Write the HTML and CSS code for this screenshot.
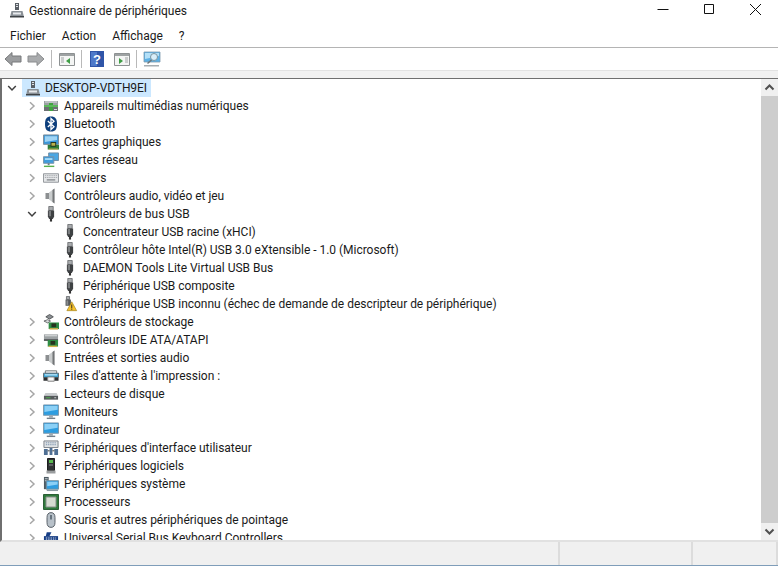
FILE: index.html
```html
<!DOCTYPE html>
<html lang="fr">
<head>
<meta charset="utf-8">
<title>Gestionnaire de périphériques</title>
<link rel="stylesheet" href="styles.css">
</head>
<body>
<svg class="defs" width="0" height="0" aria-hidden="true">
  <defs>
    <symbol id="chev-r" viewBox="0 0 10 10"><path d="M3 1.200 7 5 3 8.800" fill="none" stroke="#a6a6a6" stroke-width="1.500"/></symbol>
    <symbol id="chev-d" viewBox="0 0 10 10"><path d="M1.200 3 5 7 8.800 3" fill="none" stroke="#404040" stroke-width="1.500"/></symbol>
    <symbol id="pc" viewBox="0 0 16 16"><path d="M6 1h4v7H6z" fill="#5a5f66"/><path d="M7 2.500h2M7 4.500h2" stroke="#dfe3e6"/><path d="M2.500 9h11l1.500 6H1z" fill="#8a9096"/><path d="M4 10.500h8v2H4z" fill="#e6e9ec"/><path d="M1 14h14v1.500H1z" fill="#3f4347"/></symbol>
    <symbol id="media" viewBox="0 0 16 16"><path d="M1 3h14v4H1z" fill="#9aa0a3"/><path d="M2 3.500h12v1H2z" fill="#dfe2e3"/><path d="M1 9h14v4H1z" fill="#6b7073"/><path d="M6 5h4v8H6z" fill="#3fa33f"/><path d="M1 7h14v2H1z" fill="#5cb85c"/><path d="M11 11h3v1h-3z" fill="#d7dcdd"/></symbol>
    <symbol id="bt" viewBox="0 0 16 16"><path d="M8 .5c4.500 0 6 2.500 6 7.500s-1.500 7.500-6 7.500S2 13 2 8 3.500.5 8 .5z" fill="#0d3f7d"/><path d="M4.800 5 11 10.800 8 13.500v-11l3 2.700L4.800 11" fill="none" stroke="#fff" stroke-width="1.300"/></symbol>
    <symbol id="gpu" viewBox="0 0 17 16"><path d="M.5 .5h16v10H.5z" fill="#3c97d9" stroke="#7c8b96"/><path d="M2 2h13v4L2 8z" fill="#9fd4f5"/><path d="M5 11h12v5H5z" fill="#2e7d3a"/><path d="M8 8h6v5H8z" fill="#24351f"/><path d="M9 9h4v3H9z" fill="#b9b14d"/><path d="M6 15h10v1H6z" fill="#d2b24a"/></symbol>
    <symbol id="net" viewBox="0 0 17 16"><path d="M6 .5h10.500v8H6z" fill="#4aa7e4" stroke="#6d8ba3"/><path d="M.5 4.500h11v7H.5z" fill="#3f9bdc" stroke="#7a93a6"/><path d="M2 6h8v2H2z" fill="#a6dbf8"/><path d="M5 11.500h2v2H5z" fill="#6b7b86"/><path d="M1 14h11v1.500H1z" fill="#58b04c"/></symbol>
    <symbol id="kbd" viewBox="0 0 17 16"><path d="M.5 3.500h16v9H.5z" fill="#e4e6e8" stroke="#8f9397"/><path d="M2 5.500h13M2 7.500h13" stroke="#a5a9ad" stroke-dasharray="1.500 .8"/><path d="M4 10h9" stroke="#8b8f93" stroke-width="1.500"/></symbol>
    <symbol id="audio" viewBox="0 0 16 16"><path d="M2.500 5h3.500v6H2.500z" fill="#8c8f91"/><path d="M6 4.500 11.500 .5v15L6 11.500z" fill="#c9cccd"/><path d="M9.500 2l2-1.500v15l-2-1.500z" fill="#727577"/></symbol>
    <symbol id="usb" viewBox="0 0 16 18"><path d="M5.500 .5h5v4.500h-5z" fill="#a9acae" stroke="#55585a" stroke-width=".8"/><path d="M4.500 5h7v7l-1.500 2.500H6L4.500 12z" fill="#3e4143"/><path d="M5.500 5.500h2.500v6H5.500z" fill="#7a7d7f"/><path d="M6.800 14h2.400v3.500H6.800z" fill="#333"/></symbol>
    <symbol id="warn" viewBox="0 0 16 18"><path d="M4 .5h3.500v3.500H4z" fill="#a9acae" stroke="#55585a" stroke-width=".8"/><path d="M3 4h6v7H3z" fill="#55585a"/><path d="M4 5h2v5H4z" fill="#8a8d8f"/><path d="M10 6.500l5.500 10h-11z" fill="#f6c12d" stroke="#9a7a16" stroke-width=".7"/><path d="M9.500 9.500h1v4h-1zM9.500 14.200h1v1.200h-1z" fill="#222"/></symbol>
    <symbol id="storage" viewBox="0 0 17 17"><path d="M3 3l4-2.500 4 2.500-4 2.500z" fill="#8b8f92" stroke="#3c3f41" stroke-width=".8"/><path d="M1 7.500l4-1.500 3 1.500-3 2z" fill="#d8dadc" stroke="#4a4d4f" stroke-width=".8"/><path d="M6 9h11v7H6z" fill="#2e8c45"/><path d="M9 10h5v4H9z" fill="#26331f"/><path d="M7 15h9v1.500H7z" fill="#d2b24a"/></symbol>
    <symbol id="ide" viewBox="0 0 17 16"><path d="M1 2h15v5H1z" fill="#9da2a4"/><path d="M2 3h13v1H2z" fill="#e0e3e4"/><path d="M1 7h15v2H1z" fill="#555a5c"/><path d="M5 8h11v7H5z" fill="#2e8c45"/><path d="M8 9h5v4H8z" fill="#26331f"/><path d="M6 14h9v1.500H6z" fill="#d2b24a"/></symbol>
    <symbol id="printer" viewBox="0 0 17 16"><path d="M2.500 2.500h12v3h-12z" fill="#f1f3f4" stroke="#6f7375"/><path d="M.5 5h16v4.500H.5z" fill="#39a5d8" stroke="#5f6a70"/><path d="M2 6h13v1.500H2z" fill="#b3e0f4"/><path d="M.5 9.500H5v3.500H.5zM12 9.500h4.500v3.500H12z" fill="#2d2f31"/><path d="M5 9h7v4.500H5z" fill="#fafafa" stroke="#777"/></symbol>
    <symbol id="disk" viewBox="0 0 17 16"><path d="M2.500 7h12L16 10H1z" fill="#c7cacc"/><path d="M1 10h15v4H1z" fill="#55595b"/><path d="M3 11.500h5v1H3z" fill="#4cae4c"/><path d="M12 11.500h2v1h-2z" fill="#d0d3d4"/></symbol>
    <symbol id="mon" viewBox="0 0 17 16"><path d="M.5 .5h16v11H.5z" fill="#2e9de0" stroke="#7f99ab"/><path d="M1.500 1.500h14v4L1.500 8z" fill="#8bd0f6"/><path d="M6.500 11.500h4V14h-4z" fill="#9fa8ae"/><path d="M4 14h9v1.500H4z" fill="#74808a"/></symbol>
    <symbol id="hid" viewBox="0 0 17 16"><path d="M1 .5h15v7H1z" fill="#dfe3e6" stroke="#7a8087"/><path d="M3 2.500h11M3 4.500h11" stroke="#7d93ad" stroke-dasharray="1.500 .8"/><path d="M1 9h4v6.500H1zM7 8h3v7.500H7zM12 9h4v6.500h-4z" fill="#4f6f94"/><path d="M5 11h2M10 11h2" stroke="#333"/></symbol>
    <symbol id="soft" viewBox="0 0 16 16"><path d="M4.500 .5h7v12h-7z" fill="#2f3234" stroke="#1c1e1f"/><path d="M6 2h4v3H6z" fill="#59b84f"/><path d="M6 6.500h4v1H6z" fill="#8a8d8f"/><path d="M3.500 12.500h9v3h-9z" fill="#9a9d9f"/></symbol>
    <symbol id="sys" viewBox="0 0 17 16"><path d="M1 .5h5v13H1z" fill="#4d5a62"/><path d="M2 2h3v1H2zM2 4h3v1H2z" fill="#c6ced3"/><path d="M3.500 4.500h13v9h-13z" fill="#2e9de0" stroke="#74909f"/><path d="M4.500 5.500h11v3l-11 2z" fill="#8bd0f6"/><path d="M4 14h12v1.500H4z" fill="#8b9aa3"/></symbol>
    <symbol id="cpu" viewBox="0 0 16 16"><path d="M.5 .5h15v15H.5z" fill="#2f7a3c" stroke="#2b5f35"/><path d="M3 3h10v10H3z" fill="#d7dcd3" stroke="#88908a"/></symbol>
    <symbol id="mouse" viewBox="0 0 16 18"><path d="M8 .7c3 0 4.500 2 4.500 5.500v5.600c0 3.500-1.500 5.500-4.500 5.500S3.500 15.300 3.500 11.800V6.200C3.500 2.700 5 .7 8 .7z" fill="#b8c1c9" stroke="#4d555c"/><path d="M7 3.500h2v5H7z" fill="#5d6a75"/></symbol>
    <symbol id="kbctl" viewBox="0 0 17 16"><path d="M1 6h15v6H1z" fill="#173e85"/><path d="M4 2h5l-2 4H3z" fill="#173e85"/><path d="M3 8h11M3 10h11" stroke="#dfe6f2" stroke-dasharray="1.500 1"/></symbol>
  </defs>
</svg>
<div class="window">
  <header class="titlebar">
    <svg class="title-icon"><use href="#pc"/></svg>
    <span class="title">Gestionnaire de périphériques</span>
    <div class="controls">
      <svg class="ctl" viewBox="0 0 46 24"><path d="M17.500 9.500h11" stroke="#111"/></svg>
      <svg class="ctl" viewBox="0 0 46 24"><path d="M18.500 4.500h9v9h-9z" fill="none" stroke="#111"/></svg>
      <svg class="ctl" viewBox="0 0 46 24"><path d="M18 4l11 11M29 4 18 15" stroke="#111" fill="none"/></svg>
    </div>
  </header>
  <nav class="menubar">
    <span>Fichier</span><span>Action</span><span>Affichage</span><span>?</span>
  </nav>
  <div class="toolbar">
    <svg class="tool arrow" viewBox="0 0 18 16"><path d="M1 8l7-6.500V5h9v6H8v3.500z" fill="#9b9d9f" stroke="#77797b"/></svg>
    <svg class="tool arrow" viewBox="0 0 18 16"><path d="M17 8l-7-6.500V5H1v6h9v3.500z" fill="#a9abad" stroke="#8a8c8e"/></svg>
    <i class="sep"></i>
    <svg class="tool" viewBox="0 0 18 16"><path d="M1.500 2.500h15v12h-15z" fill="#f4f5f4" stroke="#8d9192"/><path d="M2 3h14v2H2z" fill="#9ea2a3"/><path d="M3 7h3M3 9h3M3 11h3" stroke="#a0a4a5"/><path d="M12 7v6L8 10z" fill="#3f9d45"/></svg>
    <i class="sep"></i>
    <svg class="tool tall" viewBox="0 0 16 18"><path d="M1 1h14v16H1z" fill="#2f55a8"/><path d="M2 2h6v14H2z" fill="#4e79c9"/><text class="qmark" x="8" y="14">?</text></svg>
    <svg class="tool" viewBox="0 0 18 16"><path d="M1.500 2.500h15v12h-15z" fill="#f4f5f4" stroke="#8d9192"/><path d="M2 3h14v2H2z" fill="#9ea2a3"/><path d="M12 7h3M12 9h3M12 11h3" stroke="#a0a4a5"/><path d="M6 7v6l4-3z" fill="#3f9d45"/></svg>
    <i class="sep"></i>
    <svg class="tool wide" viewBox="0 0 18 18"><path d="M1 2h16v10H1z" fill="#5cb1e6" stroke="#7d99ad" stroke-width=".8"/><path d="M2 3h14v3L2 9z" fill="#b3e0f8"/><circle cx="11" cy="7" r="3.500" fill="#d9eef9" stroke="#7c949f"/><path d="M8.500 10l-4 3.500" stroke="#6c7478" stroke-width="1.500"/><path d="M1 15h15v1.500H1z" fill="#a7adb1"/></svg>
  </div>
  <main class="content">
    <div class="tree">
      <div class="row root"><svg class="chev"><use href="#chev-d"/></svg><div class="sel"><svg class="ico"><use href="#pc"/></svg><span>DESKTOP-VDTH9EI</span></div></div>
      <div class="row"><svg class="chev"><use href="#chev-r"/></svg><svg class="ico"><use href="#media"/></svg><span>Appareils multimédias numériques</span></div>
      <div class="row"><svg class="chev"><use href="#chev-r"/></svg><svg class="ico"><use href="#bt"/></svg><span>Bluetooth</span></div>
      <div class="row"><svg class="chev"><use href="#chev-r"/></svg><svg class="ico"><use href="#gpu"/></svg><span>Cartes graphiques</span></div>
      <div class="row"><svg class="chev"><use href="#chev-r"/></svg><svg class="ico"><use href="#net"/></svg><span>Cartes réseau</span></div>
      <div class="row"><svg class="chev"><use href="#chev-r"/></svg><svg class="ico"><use href="#kbd"/></svg><span>Claviers</span></div>
      <div class="row"><svg class="chev"><use href="#chev-r"/></svg><svg class="ico"><use href="#audio"/></svg><span>Contrôleurs audio, vidéo et jeu</span></div>
      <div class="row"><svg class="chev"><use href="#chev-d"/></svg><svg class="ico"><use href="#usb"/></svg><span>Contrôleurs de bus USB</span></div>
      <div class="row child"><svg class="ico"><use href="#usb"/></svg><span>Concentrateur USB racine (xHCI)</span></div>
      <div class="row child"><svg class="ico"><use href="#usb"/></svg><span>Contrôleur hôte Intel(R) USB 3.0 eXtensible - 1.0 (Microsoft)</span></div>
      <div class="row child"><svg class="ico"><use href="#usb"/></svg><span>DAEMON Tools Lite Virtual USB Bus</span></div>
      <div class="row child"><svg class="ico"><use href="#usb"/></svg><span>Périphérique USB composite</span></div>
      <div class="row child"><svg class="ico"><use href="#warn"/></svg><span>Périphérique USB inconnu (échec de demande de descripteur de périphérique)</span></div>
      <div class="row"><svg class="chev"><use href="#chev-r"/></svg><svg class="ico"><use href="#storage"/></svg><span>Contrôleurs de stockage</span></div>
      <div class="row"><svg class="chev"><use href="#chev-r"/></svg><svg class="ico"><use href="#ide"/></svg><span>Contrôleurs IDE ATA/ATAPI</span></div>
      <div class="row"><svg class="chev"><use href="#chev-r"/></svg><svg class="ico"><use href="#audio"/></svg><span>Entrées et sorties audio</span></div>
      <div class="row"><svg class="chev"><use href="#chev-r"/></svg><svg class="ico"><use href="#printer"/></svg><span>Files d'attente à l'impression :</span></div>
      <div class="row"><svg class="chev"><use href="#chev-r"/></svg><svg class="ico"><use href="#disk"/></svg><span>Lecteurs de disque</span></div>
      <div class="row"><svg class="chev"><use href="#chev-r"/></svg><svg class="ico"><use href="#mon"/></svg><span>Moniteurs</span></div>
      <div class="row"><svg class="chev"><use href="#chev-r"/></svg><svg class="ico"><use href="#mon"/></svg><span>Ordinateur</span></div>
      <div class="row"><svg class="chev"><use href="#chev-r"/></svg><svg class="ico"><use href="#hid"/></svg><span>Périphériques d'interface utilisateur</span></div>
      <div class="row"><svg class="chev"><use href="#chev-r"/></svg><svg class="ico"><use href="#soft"/></svg><span>Périphériques logiciels</span></div>
      <div class="row"><svg class="chev"><use href="#chev-r"/></svg><svg class="ico"><use href="#sys"/></svg><span>Périphériques système</span></div>
      <div class="row"><svg class="chev"><use href="#chev-r"/></svg><svg class="ico"><use href="#cpu"/></svg><span>Processeurs</span></div>
      <div class="row"><svg class="chev"><use href="#chev-r"/></svg><svg class="ico"><use href="#mouse"/></svg><span>Souris et autres périphériques de pointage</span></div>
      <div class="row"><svg class="chev"><use href="#chev-r"/></svg><svg class="ico"><use href="#kbctl"/></svg><span>Universal Serial Bus Keyboard Controllers</span></div>
    </div>
    <div class="scrollbar">
      <svg class="sb-btn" viewBox="0 0 17 17"><path d="M4.500 10.500 8.500 6.500l4 4" fill="none" stroke="#505050" stroke-width="2"/></svg>
      <div class="thumb"></div>
      <svg class="sb-btn" viewBox="0 0 17 17"><path d="M4.500 6.500l4 4 4-4" fill="none" stroke="#505050" stroke-width="2"/></svg>
    </div>
  </main>
  <footer class="status">
    <div class="cell grow"></div><div class="cell mid"></div><div class="cell end"></div>
  </footer>
</div>
</body>
</html>
```
FILE: styles.css
```css
* { box-sizing: border-box; }
html, body { margin: 0; padding: 0; }
body {
  width: 778px;
  height: 566px;
  overflow: hidden;
  background: #fff;
  font-family: "Roboto", "Noto Sans", sans-serif;
  font-size: 12px;
  color: #1a1a1a;
}
.defs { position: absolute; }
.window { display: flex; flex-direction: column; height: 566px; }

.titlebar { display: flex; align-items: flex-start; height: 24px; flex: none; padding: 2px 0 0 9px; }
.title-icon { width: 16px; height: 16px; flex: none; }
.title { margin-left: 4px; font-size: 12px; line-height: 16px; padding-top: 1px; flex: 1; letter-spacing: -0.05px; }
.controls { display: flex; margin-top: -2px; }
.ctl { width: 46px; height: 24px; display: block; }

.menubar { display: flex; height: 24px; flex: none; align-items: center; padding-left: 10px; gap: 16px; border-bottom: 1px solid #b4b4b4; }

.toolbar { display: flex; align-items: center; height: 23px; flex: none; padding-left: 4px; gap: 4px; border-bottom: 1px solid #e2e2e2; }
.tool { width: 18px; height: 16px; flex: none; }
.tool.tall { width: 16px; height: 18px; margin-left: 1px; margin-right: 4px; }
.tool.wide { width: 18px; height: 18px; }
.tool.arrow { margin-right: 1px; }
.sep { width: 1px; height: 18px; background: #b9b9b9; flex: none; margin: 0 2px 0 1px; }
.qmark { font-size: 13px; font-weight: 700; fill: #fff; text-anchor: middle; font-family: "Liberation Sans", sans-serif; }

.content { display: flex; flex: 1; min-height: 0; border-top: 7px solid #f1f1f1; background: #fff; }
.tree { flex: 1; overflow: hidden; border-top: 1px solid #6f6f6f; border-left: 2px solid #6f6f6f; border-bottom: 2px solid #e1e1e1; letter-spacing: -0.025px; }
.row { display: flex; align-items: center; height: 18px; padding-left: 25px; white-space: nowrap; }
.row.root { padding-left: 5px; }
.row.child { padding-left: 60px; }
.chev { width: 10px; height: 10px; flex: none; }
.ico { width: 16px; height: 16px; flex: none; margin-left: 6px; margin-right: 5px; }
.child .ico { margin-left: 0; }
.sel { display: flex; align-items: center; height: 18px; margin-left: 5px; padding-right: 4px; background: #cce8ff; letter-spacing: -0.1px; }
.sel .ico { margin-left: 3px; margin-right: 4px; }

.scrollbar { width: 17px; flex: none; display: flex; flex-direction: column; background: #f0f0f0; border-top: 1px solid #6f6f6f; border-bottom: 2px solid #e1e1e1; }
.sb-btn { width: 17px; height: 17px; flex: none; display: block; }
.thumb { flex: 1; background: #cdcdcd; }

.status { display: flex; height: 24px; flex: none; background: #f0f0f0; border-bottom: 1px solid #7f9db9; }
.cell { border-right: 2px solid #dcdcdc; }
.grow { flex: 1; }
.mid { width: 133px; }
.end { width: 85px; }
```
